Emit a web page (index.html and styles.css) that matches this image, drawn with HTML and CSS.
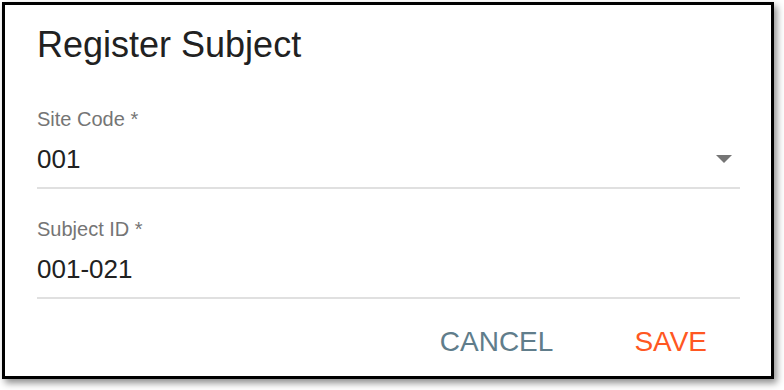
FILE: index.html
```html
<!DOCTYPE html>
<html lang="en">
<head>
<meta charset="utf-8">
<title>Register Subject</title>
<link rel="stylesheet" href="styles.css">
</head>
<body>
<div class="dialog">
  <h1 class="dialog-title">Register Subject</h1>
  <div class="field field-site">
    <label class="field-label">Site Code *</label>
    <div class="field-input">
      <span class="field-value">001</span>
      <svg class="field-arrow" width="16" height="8" viewBox="0 0 16 8"><path d="M0 0H16L8 8Z" fill="#757575"/></svg>
    </div>
  </div>
  <div class="field field-subject">
    <label class="field-label">Subject ID *</label>
    <div class="field-input">
      <span class="field-value">001-021</span>
    </div>
  </div>
  <div class="dialog-actions">
    <button class="btn btn-cancel">CANCEL</button>
    <button class="btn btn-save">SAVE</button>
  </div>
</div>
</body>
</html>
```
FILE: styles.css
```css
html, body {
  margin: 0;
  padding: 0;
  background: #ffffff;
}
body {
  font-family: "Liberation Sans", Arial, Helvetica, sans-serif;
  width: 784px;
  height: 390px;
  overflow: hidden;
}
.dialog {
  box-sizing: border-box;
  margin: 2px 0 0 2px;
  width: 772px;
  height: 377px;
  border: 3px solid #000;
  background: #fff;
  box-shadow: 3px 4px 7px rgba(0, 0, 0, 0.45);
  padding: 18px 31px 0 32px;
}
.dialog-title {
  margin: 0;
  font-size: 36px;
  line-height: 44px;
  font-weight: 400;
  color: #212121;
}
.field {
  display: flex;
  flex-direction: column;
}
.field-site {
  margin-top: 40px;
}
.field-subject {
  margin-top: 28px;
}
.field-label {
  font-size: 20px;
  line-height: 24px;
  color: #757575;
}
.field-input {
  margin-top: 12px;
  display: flex;
  align-items: center;
  justify-content: space-between;
  border-bottom: 2px solid #e0e0e0;
  padding-bottom: 12px;
}
.field-value {
  font-size: 26px;
  line-height: 32px;
  color: #212121;
}
.field-arrow {
  margin-right: 8px;
  display: block;
}
.dialog-actions {
  margin-top: 25px;
  display: flex;
  justify-content: flex-end;
  gap: 47px;
  padding-right: 16px;
}
.btn {
  font-family: inherit;
  font-size: 28px;
  line-height: 36px;
  background: none;
  border: none;
  padding: 0 17px;
  margin: 0;
  cursor: pointer;
}
.btn-cancel {
  color: #607d8b;
}
.btn-save {
  color: #ff5722;
}
```
